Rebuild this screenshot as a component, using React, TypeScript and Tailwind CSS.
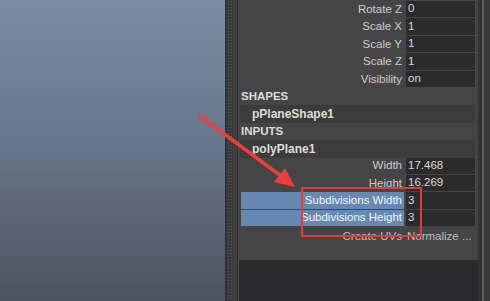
const font = { fontFamily: '"Liberation Sans", Arial, sans-serif' };

type Row = { label: string; value?: string; hl?: boolean };

const topRows: Row[] = [
  { label: "Rotate Z", value: "0" },
  { label: "Scale X", value: "1" },
  { label: "Scale Y", value: "1" },
  { label: "Scale Z", value: "1" },
  { label: "Visibility", value: "on" },
];

const polyRows: Row[] = [
  { label: "Width", value: "17.468" },
  { label: "Height", value: "16.269" },
  { label: "Subdivisions Width", value: "3", hl: true },
  { label: "Subdivisions Height", value: "3", hl: true },
];

function FieldRow({ label, value, hl }: Row) {
  return (
    <div className="flex h-[17.4px] shrink-0">
      <div
        className={`ml-[2px] flex w-[163px] items-center justify-end pr-[2px] leading-none ${
          hl ? "mb-px bg-[#6689b4] text-[#f4f6fa]" : "text-[#cdcdcd]"
        }`}
      >
        {label}
      </div>
      <div className="mb-px ml-[2px] flex w-[69px] items-center bg-[#2b2b2b] pl-[2px] leading-none text-[#dadada]">
        {value}
      </div>
    </div>
  );
}

function Header({ text }: { text: string }) {
  return (
    <div className="flex h-[17.4px] shrink-0 items-center pl-[2px] text-[11.5px] font-bold leading-none text-[#dcdcdc]">
      {text}
    </div>
  );
}

function NodeRow({ text }: { text: string }) {
  return (
    <div className="ml-px mr-[3px] flex h-[17.4px] shrink-0 items-center bg-[#3c3c3c] pl-[12px] text-[12px] font-bold leading-none text-[#dcdcdc]">
      {text}
    </div>
  );
}

export default function App() {
  return (
    <div className="relative flex h-[301px] w-[490px] overflow-hidden text-[11.5px]" style={font}>
      <div className="w-[225px] bg-gradient-to-b from-[#7b8ca2] via-[#667589] to-[#4d5360]" />
      <div className="flex w-[14px]">
        <div className="w-[2px] bg-[#333]" />
        <div className="w-[6px] bg-[#3a3a3a] bg-[radial-gradient(circle,#5c5c5c_0.8px,transparent_1px)] bg-[length:3px_3px]" />
        <div className="w-[4px] bg-[#3f3f3f]" />
        <div className="w-px bg-[#2e2e2e]" />
        <div className="w-px bg-[#4a4a4a]" />
      </div>
      <div className="flex w-[239px] flex-col bg-[#454545]">
        <div className="mt-[1px] flex flex-col">
          {topRows.map((r) => (
            <FieldRow key={r.label} {...r} />
          ))}
          <Header text="SHAPES" />
          <NodeRow text="pPlaneShape1" />
          <Header text="INPUTS" />
          <NodeRow text="polyPlane1" />
          {polyRows.map((r) => (
            <FieldRow key={r.label} {...r} />
          ))}
          <div className="flex h-[19px] shrink-0 items-center">
            <div className="ml-[2px] w-[163px] pr-[2px] text-right leading-none text-[#bdbdbd]">Create UVs</div>
            <div className="ml-[2px] pl-[1px] leading-none text-[#bdbdbd]">Normalize ...</div>
          </div>
        </div>
        <div className="h-[14px] shrink-0" />
        <div className="flex-1 bg-[#2a292b]" />
      </div>
      <div className="flex flex-1">
        <div className="w-[4px] bg-[#333]" />
        <div className="w-[2px] bg-[#5e5e5e]" />
        <div className="flex-1 bg-[#3a3a3a]" />
      </div>

      <div className="pointer-events-none absolute left-[301px] top-[187px] h-[50px] w-[121px] border-2 border-[#e33b3b]" />
      <svg className="pointer-events-none absolute left-0 top-0" width="490" height="301">
        <line x1="200" y1="116" x2="281" y2="176" stroke="#e8403c" strokeWidth="3.5" strokeLinecap="round" />
        <polygon points="295,187 274,182 285,168" fill="#e8403c" />
      </svg>
    </div>
  );
}
